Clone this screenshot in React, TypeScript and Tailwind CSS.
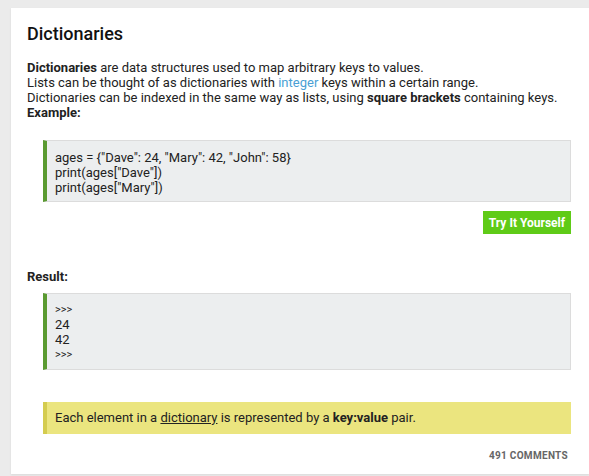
export default function App() {
  return (
    <div className="h-[476px] overflow-hidden bg-[#ebebeb] pl-[11px] pt-[8px] font-['Roboto',sans-serif] text-[#222]">
      <div className="h-[466px] bg-white pl-[16px] pr-[18px] pt-[15px] shadow-[0_1px_2px_rgba(0,0,0,0.08)]">
        <h1 className="text-[18px] font-medium leading-[22px] text-[#111]">Dictionaries</h1>

        <div className="mt-[15px] text-[13px] leading-[15px]">
          <p>
            <b className="font-bold">Dictionaries</b> are data structures used to map arbitrary keys to values.
          </p>
          <p>
            Lists can be thought of as dictionaries with{" "}
            <span className="text-[#4a9fd5]">integer</span> keys within a certain range.
          </p>
          <p>
            Dictionaries can be indexed in the same way as lists, using{" "}
            <b className="font-bold">square brackets</b> containing keys.
          </p>
          <p className="font-bold">Example:</p>
        </div>

        <div className="ml-[16px] mt-[20px] border border-l-[4px] border-[#dcdcdc] border-l-[#5a9a31] bg-[#eceeef] pb-[6px] pl-[8px] pt-[9px] text-[13px] leading-[15px]">
          <p>ages = {"{"}"Dave": 24, "Mary": 42, "John": 58{"}"}</p>
          <p>print(ages["Dave"])</p>
          <p>print(ages["Mary"])</p>
        </div>

        <div className="mt-[9px] flex justify-end">
          <button className="h-[23px] bg-[#5fcb17] px-[6px] text-[12px] font-bold text-white">
            Try It Yourself
          </button>
        </div>

        <p className="mt-[35px] text-[13px] font-bold leading-[15px]">Result:</p>

        <div className="ml-[16px] mt-[9px] border border-l-[4px] border-[#dcdcdc] border-l-[#5a9a31] bg-[#eceeef] pb-[7px] pl-[8px] pt-[8px] text-[13px] leading-[15px]">
          <p className="text-[11px]">&gt;&gt;&gt;</p>
          <p>24</p>
          <p>42</p>
          <p className="text-[11px]">&gt;&gt;&gt;</p>
        </div>

        <div className="ml-[16px] mt-[32px] flex h-[32px] items-center border-l-[4px] border-[#d4cc4f] bg-[#ebe57f] pl-[8px] text-[13px]">
          <p>
            Each element in a <span className="underline">dictionary</span> is represented by a{" "}
            <b className="font-bold">key:value</b> pair.
          </p>
        </div>

        <div className="mt-[14px] flex justify-end pr-[3px]">
          <span className="text-[10px] font-bold leading-[15px] tracking-[0.3px] text-[#666]">491 COMMENTS</span>
        </div>
      </div>
    </div>
  );
}
